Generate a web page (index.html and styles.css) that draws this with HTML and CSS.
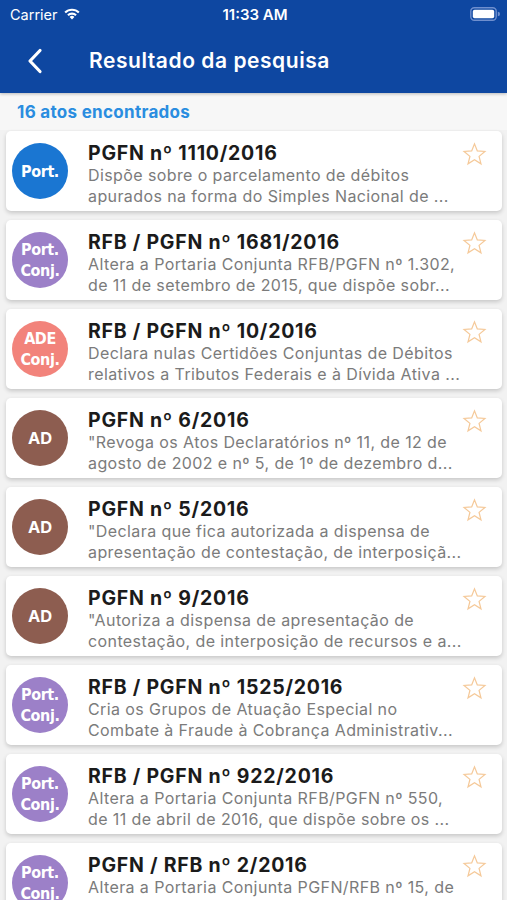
FILE: index.html
```html
<!DOCTYPE html>
<html lang="pt">
<head>
<meta charset="utf-8">
<link rel="stylesheet" href="styles.css">
</head>
<body>
<header class="top">
  <div class="status">
    <div class="status-left">
      <span class="carrier">Carrier</span>
      <svg class="wifi" width="18" height="13" viewBox="0 0 18 13"><path d="M9 12.5 L6.6 9.9 A3.4 3.4 0 0 1 11.4 9.9 Z" fill="#fff"/><path d="M4.2 7.6 A6.8 6.8 0 0 1 13.8 7.6 L12.3 9.1 A4.7 4.7 0 0 0 5.7 9.1 Z" fill="#fff"/><path d="M1.4 4.8 A10.8 10.8 0 0 1 16.6 4.8 L15.1 6.3 A8.7 8.7 0 0 0 2.9 6.3 Z" fill="#fff"/></svg>
    </div>
    <div class="time">11:33 AM</div>
    <div class="status-right">
      <svg width="30" height="14" viewBox="0 0 30 14"><rect x="0.8" y="0.8" width="25.4" height="12.4" rx="3.5" fill="none" stroke="#6f8fce" stroke-width="1.4"/><rect x="2.8" y="2.8" width="21.4" height="8.4" rx="1.8" fill="#fff"/><path d="M27.8 4.8 A2.2 2.2 0 0 1 27.8 9.2 Z" fill="#6f8fce"/></svg>
    </div>
  </div>
  <nav class="navbar">
    <svg class="back" width="16" height="26" viewBox="0 0 16 26"><path d="M13 2.5 L3 13 L13 23.5" fill="none" stroke="#fff" stroke-width="3.2" stroke-linecap="round" stroke-linejoin="round"/></svg>
    <h1 class="nav-title">Resultado da pesquisa</h1>
  </nav>
</header>
<main class="content">
  <div class="count">16 atos encontrados</div>
  <ul class="list">
    <li class="card">
      <div class="badge b-blue"><span>Port.</span></div>
      <div class="info">
        <div class="title">PGFN nº 1110/2016</div>
        <div class="desc">Dispõe sobre o parcelamento de débitos</div>
        <div class="desc">apurados na forma do Simples Nacional de ...</div>
      </div>
      <svg class="star" viewBox="0 0 24 24"><path d="M12 1.8 L14.7 8.6 L22 9.1 L16.4 13.8 L18.2 21 L12 17 L5.8 21 L7.6 13.8 L2 9.1 L9.3 8.6 Z"/></svg>
    </li>
    <li class="card">
      <div class="badge b-purple"><span>Port.<br>Conj.</span></div>
      <div class="info">
        <div class="title">RFB / PGFN nº 1681/2016</div>
        <div class="desc">Altera a Portaria Conjunta RFB/PGFN nº 1.302,</div>
        <div class="desc">de 11 de setembro de 2015, que dispõe sobr...</div>
      </div>
      <svg class="star" viewBox="0 0 24 24"><path d="M12 1.8 L14.7 8.6 L22 9.1 L16.4 13.8 L18.2 21 L12 17 L5.8 21 L7.6 13.8 L2 9.1 L9.3 8.6 Z"/></svg>
    </li>
    <li class="card">
      <div class="badge b-salmon"><span>ADE<br>Conj.</span></div>
      <div class="info">
        <div class="title">RFB / PGFN nº 10/2016</div>
        <div class="desc">Declara nulas Certidões Conjuntas de Débitos</div>
        <div class="desc">relativos a Tributos Federais e à Dívida Ativa ...</div>
      </div>
      <svg class="star" viewBox="0 0 24 24"><path d="M12 1.8 L14.7 8.6 L22 9.1 L16.4 13.8 L18.2 21 L12 17 L5.8 21 L7.6 13.8 L2 9.1 L9.3 8.6 Z"/></svg>
    </li>
    <li class="card">
      <div class="badge b-brown"><span class="ad">AD</span></div>
      <div class="info">
        <div class="title">PGFN nº 6/2016</div>
        <div class="desc">"Revoga os Atos Declaratórios nº 11, de 12 de</div>
        <div class="desc">agosto de 2002 e nº 5, de 1º de dezembro d...</div>
      </div>
      <svg class="star" viewBox="0 0 24 24"><path d="M12 1.8 L14.7 8.6 L22 9.1 L16.4 13.8 L18.2 21 L12 17 L5.8 21 L7.6 13.8 L2 9.1 L9.3 8.6 Z"/></svg>
    </li>
    <li class="card">
      <div class="badge b-brown"><span class="ad">AD</span></div>
      <div class="info">
        <div class="title">PGFN nº 5/2016</div>
        <div class="desc">"Declara que fica autorizada a dispensa de</div>
        <div class="desc">apresentação de contestação, de interposiçã...</div>
      </div>
      <svg class="star" viewBox="0 0 24 24"><path d="M12 1.8 L14.7 8.6 L22 9.1 L16.4 13.8 L18.2 21 L12 17 L5.8 21 L7.6 13.8 L2 9.1 L9.3 8.6 Z"/></svg>
    </li>
    <li class="card">
      <div class="badge b-brown"><span class="ad">AD</span></div>
      <div class="info">
        <div class="title">PGFN nº 9/2016</div>
        <div class="desc">"Autoriza a dispensa de apresentação de</div>
        <div class="desc">contestação, de interposição de recursos e a...</div>
      </div>
      <svg class="star" viewBox="0 0 24 24"><path d="M12 1.8 L14.7 8.6 L22 9.1 L16.4 13.8 L18.2 21 L12 17 L5.8 21 L7.6 13.8 L2 9.1 L9.3 8.6 Z"/></svg>
    </li>
    <li class="card">
      <div class="badge b-purple"><span>Port.<br>Conj.</span></div>
      <div class="info">
        <div class="title">RFB / PGFN nº 1525/2016</div>
        <div class="desc">Cria os Grupos de Atuação Especial no</div>
        <div class="desc">Combate à Fraude à Cobrança Administrativ...</div>
      </div>
      <svg class="star" viewBox="0 0 24 24"><path d="M12 1.8 L14.7 8.6 L22 9.1 L16.4 13.8 L18.2 21 L12 17 L5.8 21 L7.6 13.8 L2 9.1 L9.3 8.6 Z"/></svg>
    </li>
    <li class="card">
      <div class="badge b-purple"><span>Port.<br>Conj.</span></div>
      <div class="info">
        <div class="title">RFB / PGFN nº 922/2016</div>
        <div class="desc">Altera a Portaria Conjunta RFB/PGFN nº 550,</div>
        <div class="desc">de 11 de abril de 2016, que dispõe sobre os ...</div>
      </div>
      <svg class="star" viewBox="0 0 24 24"><path d="M12 1.8 L14.7 8.6 L22 9.1 L16.4 13.8 L18.2 21 L12 17 L5.8 21 L7.6 13.8 L2 9.1 L9.3 8.6 Z"/></svg>
    </li>
    <li class="card">
      <div class="badge b-purple"><span>Port.<br>Conj.</span></div>
      <div class="info">
        <div class="title">PGFN / RFB nº 2/2016</div>
        <div class="desc">Altera a Portaria Conjunta PGFN/RFB nº 15, de</div>
        <div class="desc">de 2016.</div>
      </div>
      <svg class="star" viewBox="0 0 24 24"><path d="M12 1.8 L14.7 8.6 L22 9.1 L16.4 13.8 L18.2 21 L12 17 L5.8 21 L7.6 13.8 L2 9.1 L9.3 8.6 Z"/></svg>
    </li>
  </ul>
</main>
</body>
</html>
```
FILE: styles.css
```css
* { box-sizing: border-box; }
html, body {
  margin: 0;
  padding: 0;
  height: 900px;
  overflow: hidden;
  background: #f2f2f2;
  font-family: Inter, "Noto Sans", "Liberation Sans", sans-serif;
}
.top {
  background: #0e47a1;
  color: #fff;
  box-shadow: 0 1px 3px rgba(0,0,0,0.25);
  position: relative;
  z-index: 2;
}
.status {
  height: 28px;
  display: flex;
  align-items: center;
  justify-content: space-between;
  padding: 0 7px 0 10px;
}
.status-left {
  display: flex;
  align-items: center;
  gap: 5px;
  width: 120px;
}
.carrier { font-size: 14.5px; }
.wifi { margin-top: -1px; }
.time { font-size: 15px; font-weight: 600; }
.status-right { width: 120px; display: flex; justify-content: flex-end; }
.navbar {
  height: 65px;
  display: flex;
  align-items: center;
  padding: 0 0 0 27px;
}
.back { flex: none; }
.nav-title {
  margin: 0 0 0 46px;
  font-size: 21px;
  font-weight: 600;
  line-height: 28px;
  letter-spacing: 0.55px;
}
.content {
  background: #f7f7f7;
}
.count {
  height: 37px;
  padding: 7px 0 0 17px;
  color: #2a8de0;
  font-size: 17px;
  font-weight: 700;
  line-height: 24px;
  letter-spacing: 0.3px;
  background: #f7f7f7;
}
.list {
  list-style: none;
  margin: 0;
  padding: 1px 5px 0 6px;
  background: #f2f2f2;
}
.card {
  height: 80px;
  margin-bottom: 9px;
  background: #fff;
  border-radius: 5px;
  box-shadow: 0 2px 4px rgba(0,0,0,0.18);
  display: flex;
  align-items: center;
  padding: 0 16px 0 6px;
  position: relative;
}
.badge {
  flex: none;
  width: 56px;
  height: 56px;
  border-radius: 50%;
  display: flex;
  align-items: center;
  justify-content: center;
  color: #fff;
  font-family: "DejaVu Sans Condensed", "DejaVu Sans", sans-serif;
  font-stretch: condensed;
  font-weight: 700;
  font-size: 16px;
  line-height: 21px;
  text-align: center;
  letter-spacing: -0.4px;
}
.badge .ad { font-family: Inter, "Liberation Sans", sans-serif; font-size: 16.5px; letter-spacing: 0; }
.b-blue { background: #1a76d2; }
.b-purple { background: #9c80c8; }
.b-salmon { background: #f2837b; }
.b-brown { background: #8d5d50; }
.info {
  flex: 1;
  align-self: flex-start;
  margin-left: 20px;
  min-width: 0;
  padding-top: 12px;
}
.title {
  font-size: 19.5px;
  font-weight: 700;
  color: #1b1b1b;
  line-height: 20px;
  letter-spacing: 0.75px;
  margin-bottom: 2px;
}
.desc {
  font-size: 16px;
  color: #7b7b7b;
  line-height: 21px;
  letter-spacing: 0.4px;
  white-space: nowrap;
  overflow: hidden;
}
.star {
  position: absolute;
  right: 15px;
  top: 11px;
  width: 25px;
  height: 25px;
  fill: none;
  stroke: #f5c999;
  stroke-width: 1.2;
}
```
